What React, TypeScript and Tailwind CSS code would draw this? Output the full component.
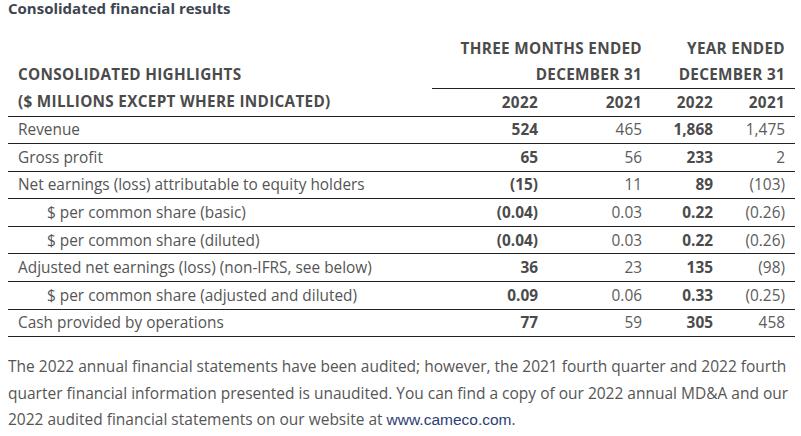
const rows = [
  { label: "Revenue", q22: "524", q21: "465", y22: "1,868", y21: "1,475" },
  { label: "Gross profit", q22: "65", q21: "56", y22: "233", y21: "2" },
  {
    label: "Net earnings (loss) attributable to equity holders",
    q22: "(15)",
    q21: "11",
    y22: "89",
    y21: "(103)",
  },
  {
    label: "$ per common share (basic)",
    q22: "(0.04)",
    q21: "0.03",
    y22: "0.22",
    y21: "(0.26)",
    indent: true,
  },
  {
    label: "$ per common share (diluted)",
    q22: "(0.04)",
    q21: "0.03",
    y22: "0.22",
    y21: "(0.26)",
    indent: true,
  },
  {
    label: "Adjusted net earnings (loss) (non-IFRS, see below)",
    q22: "36",
    q21: "23",
    y22: "135",
    y21: "(98)",
  },
  {
    label: "$ per common share (adjusted and diluted)",
    q22: "0.09",
    q21: "0.06",
    y22: "0.33",
    y21: "(0.25)",
    indent: true,
  },
  { label: "Cash provided by operations", q22: "77", q21: "59", y22: "305", y21: "458" },
];

export default function App() {
  return (
    <div
      className="w-[801px] h-[436px] overflow-hidden bg-white px-2 text-[#555]"
      style={{ fontFamily: '"Open Sans", "Noto Sans", sans-serif' }}
    >
      <h2 className="text-[15px] font-bold leading-[17px] text-[#3e4550]">
        Consolidated financial results
      </h2>

      <table className="mt-[18px] w-[787px] border-collapse text-[15.4px]">
        <colgroup>
          <col className="w-[424px]" />
          <col className="w-[116px]" />
          <col className="w-[104px]" />
          <col className="w-[71px]" />
          <col className="w-[72px]" />
        </colgroup>
        <thead className="text-[15.3px] font-bold uppercase tracking-[0.3px] text-[#4b4b4b]">
          <tr className="h-[26px]">
            <th />
            <th colSpan={2} className="px-[10px] text-right">
              Three months ended
            </th>
            <th colSpan={2} className="px-[10px] text-right">
              Year ended
            </th>
          </tr>
          <tr className="h-[27px]">
            <th className="px-[10px] text-left">Consolidated highlights</th>
            <th colSpan={2} className="border-b border-[#222] px-[10px] text-right">
              December 31
            </th>
            <th colSpan={2} className="border-b border-[#222] px-[10px] text-right">
              December 31
            </th>
          </tr>
          <tr className="h-[28px] border-b border-[#222]">
            <th className="whitespace-nowrap px-[10px] text-left">
              ($ millions except where indicated)
            </th>
            <th className="px-[10px] text-right">2022</th>
            <th className="px-[10px] text-right">2021</th>
            <th className="px-[10px] text-right">2022</th>
            <th className="px-[10px] text-right">2021</th>
          </tr>
        </thead>
        <tbody>
          {rows.map((r) => (
            <tr key={r.label} className="h-[27.6px] border-b border-[#222]">
              <td className={r.indent ? "pl-[39px] pr-[10px]" : "px-[10px]"}>{r.label}</td>
              <td className="px-[10px] text-right font-bold text-[#4b4b4b]">{r.q22}</td>
              <td className="px-[10px] text-right text-[#5c5c5c]">{r.q21}</td>
              <td className="px-[10px] text-right font-bold text-[#4b4b4b]">{r.y22}</td>
              <td className="px-[10px] text-right text-[#5c5c5c]">{r.y21}</td>
            </tr>
          ))}
        </tbody>
      </table>

      <p className="mt-[16px] w-[787px] text-[15.5px] leading-[26.5px]">
        The 2022 annual financial statements have been audited; however, the 2021 fourth
        quarter and 2022 fourth quarter financial information presented is unaudited. You can
        find a copy of our 2022 annual MD&amp;A and our 2022 audited financial statements on our
        website at{" "}
        <a
          href="#"
          className="text-[#2c3d75]"
          style={{ fontFamily: '"Liberation Sans", Arial, sans-serif' }}
        >
          www.cameco.com
        </a>
        .
      </p>
    </div>
  );
}
